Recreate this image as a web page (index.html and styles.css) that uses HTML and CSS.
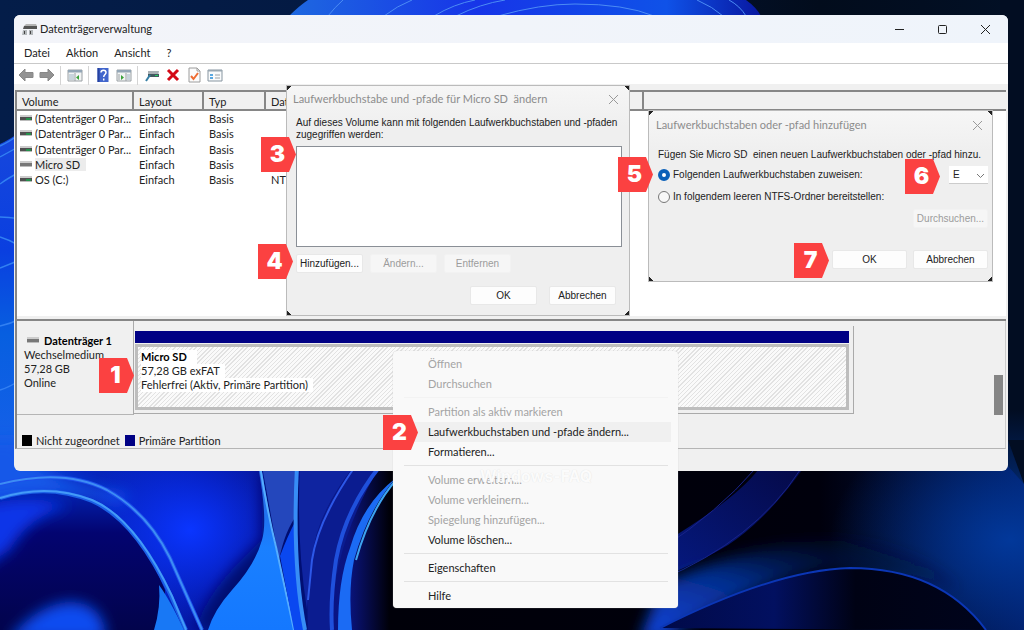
FILE: index.html
```html
<!DOCTYPE html>
<html lang="de">
<head>
<meta charset="utf-8">
<title>Datenträgerverwaltung</title>
<link rel="stylesheet" href="styles.css">
</head>
<body>
<div class="desktop">
<svg class="wallpaper" viewBox="0 0 1024 630" preserveAspectRatio="xMidYMid slice" aria-hidden="true">
  <defs>
    <linearGradient id="sky" x1="0" y1="0" x2="1" y2="0"><stop offset="0" stop-color="#041d49"/><stop offset=".5" stop-color="#04183f"/><stop offset=".8" stop-color="#020c1c"/><stop offset="1" stop-color="#021026"/></linearGradient>
    <linearGradient id="petal" x1="0" y1="0" x2="1" y2="0"><stop offset="0" stop-color="#1e68e0"/><stop offset=".4" stop-color="#1735e8"/><stop offset=".8" stop-color="#0f52e8"/><stop offset="1" stop-color="#0817a0"/></linearGradient>
    <linearGradient id="left" x1="0" y1="0" x2="0" y2="1"><stop offset="0" stop-color="#1747dc"/><stop offset=".35" stop-color="#0a3fe0"/><stop offset=".6" stop-color="#075fe0"/><stop offset="1" stop-color="#1860ea"/></linearGradient>
    <linearGradient id="floor" x1="0" y1="0" x2="1" y2="0"><stop offset="0" stop-color="#0f49de"/><stop offset=".08" stop-color="#0628c0"/><stop offset=".2" stop-color="#0415a0"/><stop offset=".34" stop-color="#0a1480"/><stop offset=".38" stop-color="#000009"/><stop offset=".8" stop-color="#00000c"/><stop offset="1" stop-color="#021a60"/></linearGradient>
    <radialGradient id="glow"><stop offset="0" stop-color="#0a35ff"/><stop offset="1" stop-color="#0a35ff" stop-opacity="0"/></radialGradient>
    <radialGradient id="haze"><stop offset="0" stop-color="#02389a"/><stop offset="1" stop-color="#02389a" stop-opacity="0"/></radialGradient>
    <linearGradient id="deep" x1="0" y1="0" x2="0" y2="1"><stop offset="0" stop-color="#0322b0"/><stop offset=".3" stop-color="#030470"/><stop offset="1" stop-color="#02044c"/></linearGradient>
    <linearGradient id="stem" x1="0" y1="0" x2="0" y2="1"><stop offset="0" stop-color="#2a60d8"/><stop offset=".5" stop-color="#1a80ff"/><stop offset="1" stop-color="#1478ff"/></linearGradient>
    <linearGradient id="wave" x1="0" y1="1" x2="1" y2="0"><stop offset="0" stop-color="#1245e0"/><stop offset=".45" stop-color="#042c88"/><stop offset="1" stop-color="#00020c" stop-opacity="0"/></linearGradient>
    <linearGradient id="ribbon" x1="0" y1="1" x2="1" y2="0"><stop offset="0" stop-color="#0620a0"/><stop offset="1" stop-color="#060c58"/></linearGradient>
    <linearGradient id="dome" x1="0" y1="0" x2="1" y2="0"><stop offset="0" stop-color="#010a48"/><stop offset=".35" stop-color="#021060"/><stop offset=".6" stop-color="#000214"/><stop offset="1" stop-color="#00041c"/></linearGradient>
    <filter id="soft" x="-30%" y="-30%" width="160%" height="160%"><feGaussianBlur stdDeviation="7"/></filter>
  </defs>
  <rect width="1024" height="630" fill="url(#sky)"/>
  <path d="M289 16 Q299 6 308 0H746Q756 7 761 16Z" fill="url(#petal)"/>
  <g fill="none" stroke="#4c8cf4"><path d="M328 16 Q335 7 343 0M384 16 Q397 6 412 0M434 16 Q454 4 475 0M456 16 Q480 4 505 0M498 16 Q540 4 575 4 Q625 4 654 16M697 0 Q713 7 723 16M729 0 Q740 6 746 16"/></g>
  <rect y="440" width="1024" height="190" fill="url(#floor)"/>
  <path d="M0 144 Q9 140 20 132V470H0Z" fill="url(#left)"/>
  <path d="M1000 0H1024V484L1008 466H1000Z" fill="#020d22"/>
  <g fill="none" stroke="#3280f2" stroke-width="1.4"><path d="M0 146 Q9 142 20 134M0 157 Q9 152 20 146M0 184 Q8 178 20 172M0 217 Q8 217 20 219M0 237 Q10 240 20 246M0 268 L20 260M0 326 Q10 324 20 319M0 390 Q10 387 20 380"/></g>
  <path d="M-20 440H20Q24 480 130 495 L120 505 Q60 480 -20 510Z" fill="#1758e8" filter="url(#soft)"/>
  <ellipse cx="190" cy="530" rx="110" ry="95" fill="url(#glow)"/>
  <path d="M196 630 Q206 590 262 540V470L310 480V630Z" fill="#060f70" filter="url(#soft)"/>
  <path d="M0 498 Q48 483 92 500 Q135 518 165 590 V630H0Z" fill="url(#deep)"/>
  <path d="M-20 506 Q30 492 70 506 Q30 515 10 550 L-20 570Z" fill="#0836e8" filter="url(#soft)"/>
  <path d="M8 640 Q40 602 72 602 Q105 604 106 640Z" fill="#0f4cf0" filter="url(#soft)"/>
  <path d="M159 585 Q170 600 184 630H154Q161 607 159 585Z" fill="#1878f5"/>
  <path d="M0 498 Q48 483 92 501 Q135 520 170 594 L186 630" fill="none" stroke="#1c60e6" stroke-width="4"/>
  <path d="M0 498 Q48 483 92 500 Q135 518 172 596 L186 630" fill="none" stroke="#439bf8" stroke-width="2"/>
  <path d="M0 484 Q64 468 107 490 Q148 513 170 558 L202 630" fill="none" stroke="#1c50ea" stroke-width="4"/>
  <path d="M0 484 Q64 468 107 490 Q148 513 170 558 L202 630" fill="none" stroke="#3d8df4" stroke-width="2"/>
  <path d="M262 466H297V515Q285 530 279 560Z" fill="#2447bc"/>
  <path d="M258 466 Q268 520 262 540 Q255 565 232 590 Q214 610 208 630H294 Q283 580 274 540 Q265 490 261 466Z" fill="url(#stem)"/>
  <path d="M260 466 Q267 510 276 547 L294 630" fill="none" stroke="#55adff" stroke-width="2"/>
  <path d="M280 556 Q288 535 296 520 Q296 580 306 630H294Z" fill="#0a48f0"/>
  <path d="M297 466 Q292 565 305 630" fill="none" stroke="#378df6" stroke-width="4"/>
  <path d="M300 466H354Q315 516 312 560L307 610Q296 540 300 466Z" fill="#0f24a0"/>
  <path d="M354 468 Q315 516 312 560 Q306 590 308 630H332Q330 550 380 466Z" fill="#0b1c90"/>
  <path d="M354 468 Q318 520 312 560 L308 600" fill="none" stroke="#2d58e8" stroke-width="2"/>
  <path d="M380 466 Q345 510 336 560 Q330 600 332 630" fill="none" stroke="#1f50dc" stroke-width="4"/>
  <path d="M396 478 Q368 510 354 560 Q348 590 352 630H338 Q338 580 350 548 Q363 503 396 478Z" fill="#1b6bf4"/>
  <path d="M396 480 Q370 510 356 560" fill="none" stroke="#3da3f0" stroke-width="2"/>
  <ellipse cx="1010" cy="540" rx="180" ry="130" fill="url(#haze)"/>
  <path d="M1008 440H1024V484Z" fill="#020d22"/>
  <path d="M660 545 Q735 500 758 470H802 Q766 520 728 545 Q700 562 660 578Z" fill="url(#ribbon)" opacity=".8"/>
  <path d="M660 550 Q720 510 754 470M660 580 Q755 540 800 470" fill="none" stroke="#18238a"/>
  <path d="M640 640 L660 585 Q745 545 830 540 Q910 540 960 590 Q910 570 850 568 Q780 567 660 640Z" fill="url(#wave)" filter="url(#soft)"/>
  <path d="M660 628 Q775 570 850 568 Q940 568 986 630Z" fill="url(#dome)"/>
  <path d="M660 628 Q775 570 850 568 Q940 568 986 630" fill="none" stroke="#0b36b5" stroke-width="2"/>
</svg>

<main class="window">
  <header class="titlebar">
    <svg class="app-icon" viewBox="0 0 15 14" aria-hidden="true"><path d="M4 2h10l1 2H2z" fill="#b5b5b5"/><path d="M2 4h13v3H1z" fill="#555"/><path d="M1 8h4v5H0zM7 8h4v5H7z" fill="#b4b8bb"/><path d="M2 9h1v3H2zM8 9h1v3H8z" fill="#444"/></svg>
    <h1>Datenträgerverwaltung</h1>
    <button aria-label="Minimieren"><svg viewBox="0 0 11 11"><path d="M1 5.500h9"/></svg></button>
    <button aria-label="Maximieren"><svg viewBox="0 0 11 11"><rect x="1.500" y="1.500" width="8" height="8" rx="1"/></svg></button>
    <button aria-label="Schließen"><svg viewBox="0 0 11 11"><path d="M1 1l9 9M10 1l-9 9"/></svg></button>
  </header>
  <nav class="menubar"><button>Datei</button><button>Aktion</button><button>Ansicht</button><button>?</button></nav>
  <div class="toolbar">
    <button aria-label="Zurück"><svg viewBox="0 0 16 16"><path d="M1 8l6-6v3.500h8v5H7V14z" fill="#929292" stroke="#888"/></svg></button>
    <button aria-label="Vorwärts"><svg viewBox="0 0 16 16"><path d="M15 8L9 2v3.500H1v5h8V14z" fill="#929292" stroke="#888"/></svg></button>
    <i></i>
    <button aria-label="Struktur anzeigen"><svg viewBox="0 0 16 16"><path d="M1 3h14v11H1z" fill="#f2f4f4" stroke="#9aa0a4"/><path d="M1 3h14v2.500H1z" fill="#93a6b6"/><path d="M2 7h5v6H2z" fill="#c8d4dc"/><path d="M8 6v8" stroke="#9aa0a4"/><path d="M12 8v5l-3-2.500z" fill="#3aa23a"/></svg></button>
    <i></i>
    <button aria-label="Hilfe"><svg viewBox="0 0 16 16"><path d="M2.500 1h11v14h-11z" fill="#4266cc"/><path d="M2.500 1h2v14h-2z" fill="#2642a0"/><path d="M6 5.500c0-3 5-3 5 0 0 2-2.300 2-2.300 4.500M8.700 11.500v2" fill="none" stroke="#fff" stroke-width="1.500"/></svg></button>
    <button aria-label="Aktionsbereich"><svg viewBox="0 0 16 16"><path d="M1 3h14v11H1z" fill="#f2f4f4" stroke="#9aa0a4"/><path d="M1 3h14v2.500H1z" fill="#93a6b6"/><path d="M11 7h3v6h-3z" fill="#c8d4dc"/><path d="M10 6v8M3 7v6" stroke="#9aa0a4"/><path d="M5 8v5l3-2.500z" fill="#3aa23a"/></svg></button>
    <i></i>
    <button aria-label="Neu einlesen"><svg viewBox="0 0 16 16"><path d="M4 4h11l-1 5H4z" fill="#aab1b5"/><path d="M4 7h11v3H4z" fill="#435a60"/><path d="M11 8h3v1h-3z" fill="#22d060"/><path d="M6 8l-4 6" stroke="#357ea4" stroke-width="2"/></svg></button>
    <button aria-label="Löschen"><svg viewBox="0 0 16 16"><path d="M3 3l10 10M13 3L3 13" stroke="#d40a16" stroke-width="3"/></svg></button>
    <button aria-label="Prüfen"><svg viewBox="0 0 16 16"><path d="M3 1h8l3 3v11H3z" fill="#fbfbfb" stroke="#9c9c9c"/><path d="M11 1v3h3" fill="none" stroke="#9c9c9c"/><path d="M5 9l2.500 3L12 6" fill="none" stroke="#ef6c32" stroke-width="2"/></svg></button>
    <button aria-label="Eigenschaften"><svg viewBox="0 0 16 16"><path d="M1 3h14v11H1z" fill="#f9fbfc" stroke="#8795a0"/><path d="M1 3h14v1.500H1z" fill="#9aa8b2"/><path d="M3 7h3v2H3zM3 10h3v2H3z" fill="#5aa8e0"/><path d="M8 8h5M8 11h5" stroke="#9aa0a4"/></svg></button>
  </div>
  <section class="volumes">
    <table>
      <colgroup><col class="c-name"><col class="c-layout"><col class="c-type"><col class="c-fs"><col></colgroup>
      <thead><tr><th>Volume</th><th>Layout</th><th>Typ</th><th>Dat</th><th></th></tr></thead>
      <tbody>
        <tr><td><b class="drive on"></b><span>(Datenträger 0 Par...</span></td><td>Einfach</td><td>Basis</td><td></td><td></td></tr>
        <tr><td><b class="drive on"></b><span>(Datenträger 0 Par...</span></td><td>Einfach</td><td>Basis</td><td></td><td></td></tr>
        <tr><td><b class="drive on"></b><span>(Datenträger 0 Par...</span></td><td>Einfach</td><td>Basis</td><td></td><td></td></tr>
        <tr><td><b class="drive"></b><span class="picked">Micro SD</span></td><td>Einfach</td><td>Basis</td><td></td><td></td></tr>
        <tr><td><b class="drive on"></b><span>OS (C:)</span></td><td>Einfach</td><td>Basis</td><td>NT</td><td></td></tr>
      </tbody>
    </table>
  </section>
  <section class="disks">
    <div class="disk-row">
      <div class="disk-info">
        <h2><b class="drive"></b>Datenträger 1</h2>
        <p>Wechselmedium</p><p>57,28 GB</p><p>Online</p>
      </div>
      <div class="partition-frame">
        <div class="stripe"></div>
        <div class="partition">
          <p><strong>Micro SD</strong></p><p><span>57,28 GB exFAT</span></p><p><span>Fehlerfrei (Aktiv, Primäre Partition)</span></p>
        </div>
      </div>
      <div class="scroll"><div class="thumb"></div></div>
    </div>
    <div class="legend"><b class="swatch free"></b>Nicht zugeordnet<b class="swatch primary"></b>Primäre Partition</div>
  </section>
  <footer class="status"></footer>
</main>

<section class="dialog paths">
  <header><h2>Laufwerkbuchstabe und -pfade für Micro SD&nbsp; ändern</h2><button class="close" aria-label="Schließen"><svg viewBox="0 0 11 11"><path d="M1 1l9 9M10 1l-9 9"/></svg></button></header>
  <label for="pathlist">Auf dieses Volume kann mit folgenden Laufwerkbuchstaben und -pfaden zugegriffen werden:</label>
  <select id="pathlist" size="5"></select>
  <div class="actions"><button>Hinzufügen...</button><button disabled>Ändern...</button><button disabled>Entfernen</button></div>
  <div class="confirm"><button>OK</button><button>Abbrechen</button></div>
</section>

<section class="dialog add">
  <header><h2>Laufwerkbuchstaben oder -pfad hinzufügen</h2><button class="close" aria-label="Schließen"><svg viewBox="0 0 11 11"><path d="M1 1l9 9M10 1l-9 9"/></svg></button></header>
  <p>Fügen Sie Micro SD&nbsp; einen neuen Laufwerkbuchstaben oder -pfad hinzu.</p>
  <div class="choice"><input type="radio" name="mode" id="assign" checked><label for="assign">Folgenden Laufwerkbuchstaben zuweisen:</label><select aria-label="Laufwerkbuchstabe"><option>E</option></select></div>
  <div class="choice"><input type="radio" name="mode" id="mount"><label for="mount">In folgendem leeren NTFS-Ordner bereitstellen:</label></div>
  <div class="browse"><button disabled>Durchsuchen...</button></div>
  <div class="confirm"><button>OK</button><button>Abbrechen</button></div>
</section>

<div class="context" role="menu">
  <button role="menuitem" disabled>Öffnen</button>
  <button role="menuitem" disabled>Durchsuchen</button>
  <hr class="faint">
  <button role="menuitem" disabled>Partition als aktiv markieren</button>
  <button role="menuitem" class="hover">Laufwerkbuchstaben und -pfade ändern...</button>
  <button role="menuitem">Formatieren...</button>
  <hr>
  <button role="menuitem" disabled>Volume erweitern...</button>
  <button role="menuitem" disabled>Volume verkleinern...</button>
  <button role="menuitem" disabled>Spiegelung hinzufügen...</button>
  <button role="menuitem">Volume löschen...</button>
  <hr>
  <button role="menuitem">Eigenschaften</button>
  <hr>
  <button role="menuitem">Hilfe</button>
  <span class="watermark">Windows-FAQ</span>
</div>

<span class="step s1">1</span><span class="step s2">2</span><span class="step s3">3</span><span class="step s4">4</span><span class="step s5">5</span><span class="step s6">6</span><span class="step s7">7</span>
</div>
</body>
</html>
```
FILE: styles.css
```css
* { box-sizing: border-box; }
body { margin: 0; font: 11px/14px Lato, "Open Sans", sans-serif; color: #222; }
h1, h2, p { margin: 0; font-size: inherit; font-weight: 400; }
button, select, input { font: inherit; color: inherit; margin: 0; padding: 0; border: 0; background: none; }
svg { display: block; }

.desktop { position: relative; min-height: 100vh; padding: 15px 16px 20px 14px; overflow: hidden; background: #020c1c; }
.wallpaper { position: absolute; inset: 0; width: 100%; height: 100%; }

.window { position: relative; display: flex; flex-direction: column; border-radius: 6px; overflow: hidden; background: #f0f0f0; }
.titlebar { display: flex; align-items: center; height: 28px; padding: 0 1px 0 8px; background: linear-gradient(90deg, #f3f4f9, #eff4fb); }
.app-icon { width: 15px; height: 14px; margin-right: 3px; }
.titlebar h1 { flex: 1; }
.titlebar button { width: 43px; height: 28px; display: grid; place-items: center; }
.titlebar svg, .close svg { width: 11px; height: 11px; fill: none; stroke: #222; }
.titlebar .app-icon { width: 15px; height: 14px; stroke: none; }
.menubar { display: flex; gap: 16px; height: 21px; padding: 0 10px; background: #fff; border-bottom: 1px solid #c9c9c9; }
.toolbar { display: flex; align-items: center; gap: 5px; height: 20px; padding: 2px 4px 0; background: #fff; }
.toolbar svg { width: 16px; height: 16px; }
.toolbar i { width: 1px; height: 19px; margin-right: 1px; background: #d4d4d4; }

.volumes { min-height: 231px; margin: 6px 2px 0 1px; border: solid #868686; border-width: 2px 0 2px 2px; background: #fff; box-shadow: inset 0 -3px #f0f0f0; }
table { width: 100%; height: 96px; border-collapse: collapse; table-layout: fixed; }
.c-name { width: 116px; }
.c-layout { width: 70px; }
.c-type { width: 62px; }
.c-fs { width: 378px; }
th { height: 18px; padding: 2px 5px 0; text-align: left; font-weight: 400; background: #f0f0f0; border-right: 2px solid #868686; border-bottom: 2px solid #868686; }
th:last-child { border-right: 0; }
td { padding: 0 6px; line-height: 14px; white-space: nowrap; }
td:first-child { padding: 0 0 0 3px; }
.picked { padding-right: 6px; background: #ececec; }
.drive { display: inline-block; width: 12px; height: 6px; margin-right: 3px; vertical-align: 2px; background: linear-gradient(#ccc 0 2px, #777 2px 5px, #bbb 5px); }
.drive.on { background: linear-gradient(90deg, transparent 6px, #25904b 6px 11px, transparent 11px) 0 3px / 12px 2px no-repeat, linear-gradient(#ccc 0 2px, #505050 2px 5px, #bbb 5px); }

.disks { margin: 0 2px 0 1px; border-left: 2px solid #868686; border-right: 1px solid #ccc; border-bottom: 1px solid #b5b5b5; }
.disk-row { display: flex; height: 112px; }
.disk-info { width: 117px; height: 94px; padding: 13px 7px 0; border-right: 1px solid #aaa; border-bottom: 1px solid #b5b5b5; }
.disk-info h2, .partition strong { font-weight: 700; color: #000; }
.disk-info .drive { margin: 0 5px 0 3px; }
.partition-frame { flex: 1; height: 88px; margin: 5px 0 0; padding: 5px 4px 4px 1px; border-right: 1px solid #aaa; border-bottom: 1px solid #aaa; }
.stripe { height: 12px; background: #000084; }
.partition { height: 66px; margin-top: 1px; padding: 3px 3px; border: 3px solid #bdbdbd; background: repeating-linear-gradient(135deg, #fafafa 0 2px, #e2e2e2 2px 3px); }
.partition span, .partition strong { display: inline-block; padding-right: 5px; background: #fff; }
.partition strong { padding-right: 10px; }
.scroll { width: 151px; padding: 54px 2px 0 0; }
.thumb { width: 9px; height: 40px; margin-left: auto; background: #858585; }
.legend { display: flex; align-items: center; height: 15px; padding-left: 5px; }
.swatch { width: 10px; height: 11px; margin-right: 4px; background: #000; }
.swatch.primary { margin-left: 5px; background: #000084; }
.status { height: 22px; }

.dialog { position: absolute; display: flex; flex-direction: column; border: 1px solid #bbb; color: #222; font: 10px/12px "Liberation Sans", Arial, sans-serif;
  background: linear-gradient(135deg, #222 3px, transparent 3px), linear-gradient(225deg, #222 3px, transparent 3px), linear-gradient(45deg, #222 3px, transparent 3px), linear-gradient(315deg, #222 3px, transparent 3px), linear-gradient(#f6f6f6, #efefef 40px); }
.dialog header { display: flex; align-items: center; justify-content: space-between; height: 26px; font: 11px/14px Lato, sans-serif; color: #8c8c8c; }
.close { width: 17px; height: 17px; display: grid; place-items: center; }
.dialog .close svg { stroke: #999; }
.dialog button:not(.close) { height: 19px; background: #fdfdfd; border: 1px solid #e8e8e8; border-radius: 2px; }
.dialog button:disabled { color: #9c9c9c; background: #f6f6f6; border-color: #f2f2f2; }
.actions, .confirm, .browse { display: flex; }
.confirm, .browse { justify-content: flex-end; }
.paths { left: 286px; top: 85px; width: 344px; padding: 0 7px 10px 9px; }
.paths header { margin-left: -3px; margin-bottom: 5px; }
.paths select { height: 101px; margin: 5px 0 7px; border: 1px solid #8a8f96; background: #fff; border-radius: 0; }
.actions { gap: 7px; }
.paths .actions button, .paths .confirm button { width: 67px; }
.paths .confirm { gap: 12px; margin: 13px 6px 0 0; }
.add { left: 648px; top: 110px; width: 345px; padding: 0 4px 12px 9px; }
.add header { margin: 1px 2px 11px -2px; }
.choice { display: flex; align-items: center; height: 22px; }
.add p + .choice { margin-top: 3px; }
.choice input { appearance: none; width: 12px; height: 12px; margin-right: 3px; border: 1px solid #777; border-radius: 50%; background: #f8f8f8; }
.choice input:checked { border: 4px solid #0a5fb8; background: #fff; }
.choice label { flex: 1; }
.choice select { appearance: none; width: 39px; height: 18px; padding-left: 4px; border-bottom: 1px solid #ccc; background: #fff url("data:image/svg+xml,%3Csvg xmlns='http://www.w3.org/2000/svg' width='9' height='6'%3E%3Cpath d='M1 1l3.500 3.500L8 1' fill='none' stroke='%23777'/%3E%3C/svg%3E") 27px 7px no-repeat; }
.browse { margin: 1px 0 22px; }
.add .browse button, .add .confirm button { width: 75px; }
.add .confirm { gap: 6px; }

.context { position: absolute; left: 393px; top: 351px; width: 285px; padding: 3px 7px 2px 10px; display: flex; flex-direction: column; background: #f9f9f9; border-radius: 4px; box-shadow: 0 0 1px #bbb; }
.context button { height: 20px; padding-left: 25px; text-align: left; }
.context button:disabled { color: #a4a4a4; }
.context .hover { background: #f0f0f0; }
.context hr { width: 264px; height: 1px; margin: 3px 1px 4px; border: 0; background: #e2e2e2; }
.context .faint { background: #f3f3f3; }
.watermark { position: absolute; left: 87px; top: 115px; font: 700 16px/20px Inter, sans-serif; color: #fbfbfb; text-shadow: 0 0 1px #ddd; }

.step { position: absolute; width: 35px; height: 35px; padding-right: 2px; background: #fb4141; clip-path: polygon(0 0, 28px 0, 100% 50%, 28px 100%, 0 100%); color: #fff; font: 900 23px/35px Inter, sans-serif; text-align: center; }
.s1 { left: 99px; top: 358px; }
.s2 { left: 383px; top: 415px; }
.s3 { left: 261px; top: 137px; }
.s4 { left: 258px; top: 244px; }
.s5 { left: 618px; top: 157px; }
.s6 { left: 905px; top: 159px; }
.s7 { left: 794px; top: 243px; }
```
